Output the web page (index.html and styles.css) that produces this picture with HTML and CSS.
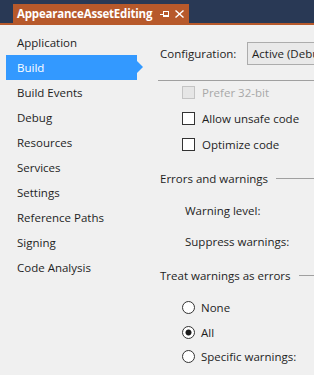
FILE: index.html
```html
<!DOCTYPE html>
<html>
<head>
<meta charset="utf-8">
<link rel="stylesheet" href="styles.css">
</head>
<body>
<div class="tabbar">
  <div class="tab">
    <span class="tab-title">AppearanceAssetEditing</span>
    <svg class="pin" width="9" height="8" viewBox="0 0 9 8"><path d="M0 4h3M3 1v6M3 1h5v5H3M3 5h5" stroke="#fff" stroke-width="1" fill="none" shape-rendering="crispEdges"/></svg>
    <svg class="close" width="9" height="8" viewBox="0 0 9 8"><path d="M0.5 0.5l8 7M8.5 0.5l-8 7" stroke="#fff" stroke-width="1.4" fill="none"/></svg>
  </div>
</div>
<div class="tabline"></div>
<div class="main">
  <nav class="nav">
    <div class="nav-item">Application</div>
    <div class="nav-item active">Build</div>
    <div class="nav-item">Build Events</div>
    <div class="nav-item">Debug</div>
    <div class="nav-item">Resources</div>
    <div class="nav-item">Services</div>
    <div class="nav-item">Settings</div>
    <div class="nav-item">Reference Paths</div>
    <div class="nav-item">Signing</div>
    <div class="nav-item">Code Analysis</div>
  </nav>
  <section class="content">
    <div class="config-row">
      <span class="config-label">Configuration:</span>
      <div class="select">Active (Debug)</div>
    </div>
    <div class="rule"></div>
    <div class="checks">
      <label class="check disabled"><input type="checkbox" disabled><span>Prefer 32-bit</span></label>
      <label class="check"><input type="checkbox"><span>Allow unsafe code</span></label>
      <label class="check"><input type="checkbox"><span>Optimize code</span></label>
    </div>
    <div class="group-head head-errors"><span>Errors and warnings</span><div class="group-line"></div></div>
    <div class="sub-rows">
      <div class="sub-row">Warning level:</div>
      <div class="sub-row">Suppress warnings:</div>
    </div>
    <div class="group-head head-treat"><span>Treat warnings as errors</span><div class="group-line"></div></div>
    <div class="radios">
      <label class="check"><input type="radio" name="tw"><span>None</span></label>
      <label class="check"><input type="radio" name="tw" checked><span>All</span></label>
      <label class="check"><input type="radio" name="tw"><span>Specific warnings:</span></label>
    </div>
  </section>
</div>
</body>
</html>
```
FILE: styles.css
```css
html, body {
  margin: 0;
  padding: 0;
}
body {
  width: 314px;
  height: 375px;
  overflow: hidden;
  background: #f0f0f0;
  font-family: "Open Sans", "Noto Sans", sans-serif;
  font-size: 11.5px;
  color: #1e1e1e;
}
.tabbar {
  height: 23px;
  background: #293955;
  padding: 4px 0 0 13px;
  box-sizing: border-box;
  display: flex;
}
.tab {
  width: 176px;
  height: 19px;
  background: #b7592b;
  display: flex;
  align-items: center;
  padding-left: 4px;
  box-sizing: border-box;
  color: #fff;
}
.tab-title {
  font-weight: bold;
  font-size: 11.5px;
  letter-spacing: -0.2px;
  width: 139px;
  white-space: nowrap;
}
.pin {
  margin-left: 4px;
  margin-top: 1px;
}
.close {
  margin-left: 6px;
  margin-top: 1px;
}
.tabline {
  height: 2px;
  background: #b7592b;
}
.main {
  display: flex;
}
.nav {
  width: 158px;
  flex: none;
  padding-top: 5px;
}
.nav-item {
  position: relative;
  margin-left: 6px;
  width: 131px;
  height: 25px;
  line-height: 25px;
  padding-left: 11px;
  box-sizing: border-box;
  white-space: nowrap;
}
.nav-item.active {
  background: #3399ff;
  color: #fff;
}
.nav-item.active::after {
  content: "";
  position: absolute;
  left: 131px;
  top: 6px;
  border-left: 6px solid #3399ff;
  border-top: 6px solid transparent;
  border-bottom: 6px solid transparent;
}
.content {
  flex: 1;
  min-width: 0;
}
.config-row {
  display: flex;
  align-items: center;
  margin-top: 17px;
  padding-left: 2px;
}
.config-label {
  width: 87px;
  flex: none;
}
.select {
  flex: none;
  width: 120px;
  height: 23px;
  box-sizing: border-box;
  border: 1px solid #acacac;
  background: #e9e9e9;
  line-height: 21px;
  padding-left: 4px;
  white-space: nowrap;
}
.rule {
  height: 1px;
  background: #a0a0a0;
  margin-top: 15px;
}
.checks {
  display: flex;
  flex-direction: column;
  gap: 13px;
  padding-top: 5px;
  padding-left: 24px;
}
.check {
  display: flex;
  align-items: center;
  height: 13px;
  white-space: nowrap;
}
.check input {
  appearance: none;
  -webkit-appearance: none;
  width: 13px;
  height: 13px;
  margin: 0 7px 0 0;
  box-sizing: border-box;
  border: 1px solid #333333;
  background: #ffffff;
  flex: none;
}
.check.disabled {
  color: #a8a8a8;
}
.check.disabled input {
  border-color: #c4c4c4;
  background: #e6e6e6;
}
.check input[type="radio"] {
  border-radius: 50%;
  margin-right: 6px;
}
.check input[type="radio"]:checked {
  background: radial-gradient(circle, #1a1a1a 0, #1a1a1a 2.6px, #ffffff 3.4px);
}
.group-head {
  display: flex;
  align-items: center;
  height: 16px;
  padding-left: 2px;
  white-space: nowrap;
}
.head-errors {
  margin-top: 19px;
}
.head-treat {
  margin-top: 17px;
}
.group-line {
  flex: 1;
  height: 1px;
  background: #a0a0a0;
  margin-left: 8px;
}
.sub-rows {
  display: flex;
  flex-direction: column;
  gap: 15px;
  margin-top: 17px;
  padding-left: 27px;
}
.sub-row {
  height: 16px;
  line-height: 16px;
  white-space: nowrap;
}
.radios {
  display: flex;
  flex-direction: column;
  gap: 11.5px;
  margin-top: 18px;
  padding-left: 24px;
}
```
